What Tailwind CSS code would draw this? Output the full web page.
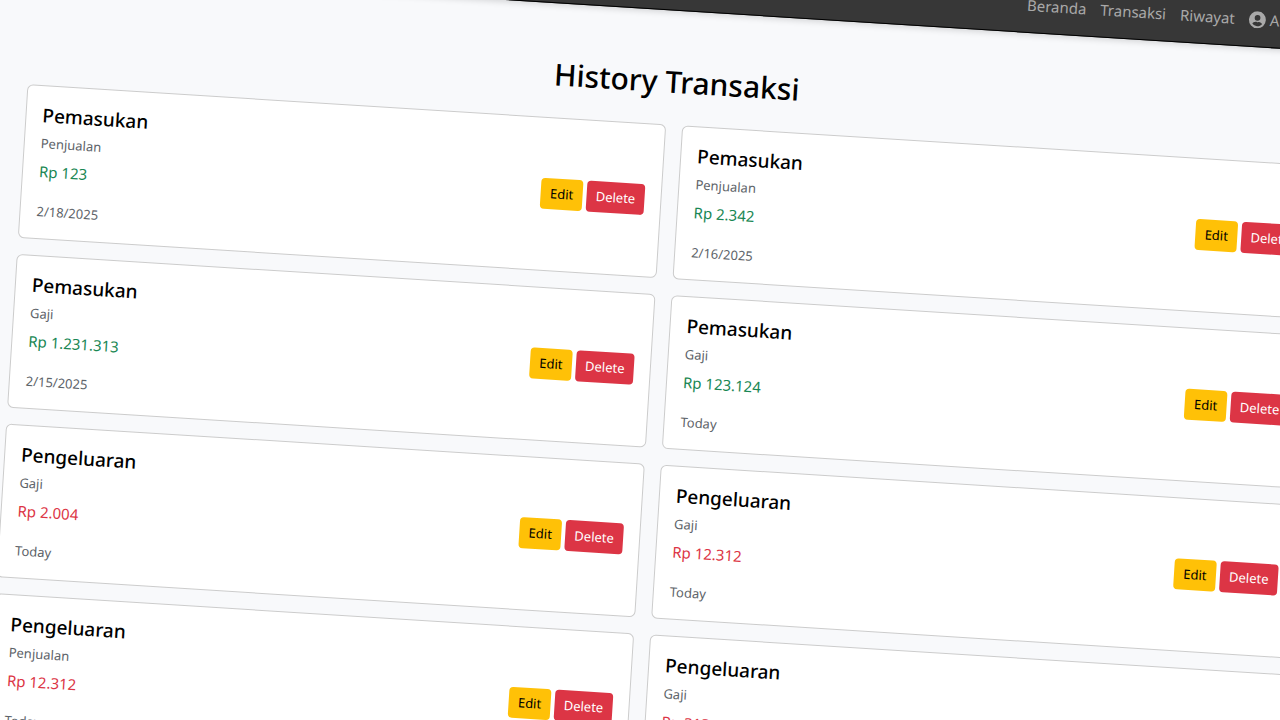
<!DOCTYPE html>
<html lang="id">
<head>
<meta charset="utf-8">
<title>History Transaksi</title>
<script src="https://cdn.jsdelivr.net/npm/@tailwindcss/browser@4"></script>
</head>
<body class="bg-[#f8f9fb] font-['Noto_Sans','Open_Sans',sans-serif] text-black">
<div class="h-screen overflow-hidden">
  <div class="-mt-21 ml-3.5 w-[calc(100%+64px)] origin-top-left rotate-[3.6deg]">
    <header class="flex h-[53px] items-center justify-end border-b border-black bg-[#373737] px-12 pb-0.5 shadow-[0_2px_6px_rgba(0,0,0,0.15)]">
      <nav class="flex items-center gap-3.5 text-[15px] leading-6 text-[#a9a9a9]">
        <a href="#">Beranda</a>
        <a href="#">Transaksi</a>
        <a href="#">Riwayat</a>
        <a href="#" class="flex items-center gap-1">
          <svg class="size-[17px]" viewBox="0 0 512 512" fill="currentColor" aria-hidden="true"><path fill-rule="evenodd" d="M256 0a256 256 0 1 0 0 512a256 256 0 1 0 0-512zM256 112a86 86 0 1 1 0 172a86 86 0 1 1 0-172zM256 448c-60 0-112-28-146-70c19-34 54-58 96-58c4 0 30 10 50 10s46-10 50-10c42 0 77 24 96 58c-34 42-86 70-146 70z"/></svg>
          <span>Akun</span>
        </a>
      </nav>
    </header>
    <main class="px-6 pt-13">
      <h1 class="mb-6 text-center text-[30px] leading-[38px] font-medium">History Transaksi</h1>
      <div id="list" class="grid grid-cols-2 gap-4"></div>
    </main>
  </div>
</div>
<template id="card">
  <article class="flex items-center justify-between rounded-md border border-[#cccccc] bg-white px-4 pt-[17px] pb-[15px]">
    <div>
      <h2 class="mb-2 text-[19px] leading-6 font-medium"></h2>
      <h3 class="mb-2 text-[13px] leading-4 text-[#5d6369]"></h3>
      <p class="amount mb-4 text-[15px] leading-6"></p>
      <p class="date text-[13px] leading-6 text-[#5d6369]"></p>
    </div>
    <div class="flex gap-1 pb-1 text-[13px] leading-[31px]">
      <button type="button" class="w-[42px] rounded bg-[#ffc107]">Edit</button>
      <button type="button" class="w-[58px] rounded bg-[#dc3545] text-white">Delete</button>
    </div>
  </article>
</template>
<script>
const rows = [
  ['Pemasukan', 'Penjualan', '123', '2/18/2025'],
  ['Pemasukan', 'Penjualan', '2.342', '2/16/2025'],
  ['Pemasukan', 'Gaji', '1.231.313', '2/15/2025'],
  ['Pemasukan', 'Gaji', '123.124', 'Today'],
  ['Pengeluaran', 'Gaji', '2.004', 'Today'],
  ['Pengeluaran', 'Gaji', '12.312', 'Today'],
  ['Pengeluaran', 'Penjualan', '12.312', 'Today'],
  ['Pengeluaran', 'Gaji', '313.51', 'Today'],
];
const list = document.getElementById('list');
const tpl = document.getElementById('card');
for (const [type, category, amount, date] of rows) {
  const card = tpl.content.cloneNode(true);
  card.querySelector('h2').textContent = type;
  card.querySelector('h3').textContent = category;
  const p = card.querySelector('.amount');
  p.textContent = 'Rp ' + amount;
  p.classList.add(type === 'Pemasukan' ? 'text-[#198754]' : 'text-[#dc3545]');
  card.querySelector('.date').textContent = date;
  list.append(card);
}
</script>
</body>
</html>
